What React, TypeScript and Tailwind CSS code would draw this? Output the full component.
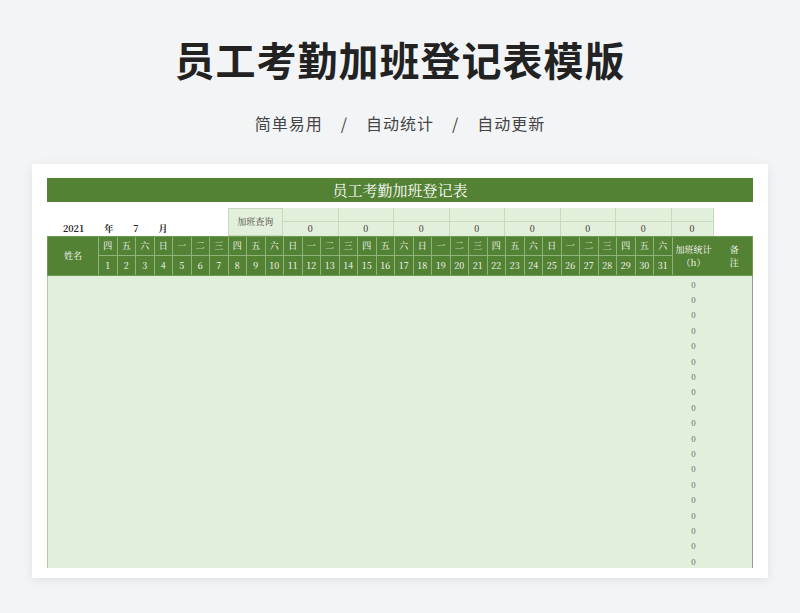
const cols = "grid-cols-[51px_repeat(31,18.5px)_42px_39.5px]";
const wk = ["日", "一", "二", "三", "四", "五", "六"];
const days = Array.from({ length: 31 }, (_, i) => i + 1);
const weekday = (d: number) => wk[(d + 3) % 7];
const groups = [11, 14, 17, 20, 23, 26, 29];
const serif = { fontFamily: '"Noto Serif CJK SC","Noto Sans CJK SC",serif' };

export default function App() {
  return (
    <div className="w-[800px] h-[613px] bg-[#f3f4f6] overflow-hidden" style={{ fontFamily: '"Noto Sans CJK SC", sans-serif' }}>
      <h1 className="pt-[33px] text-center text-[40px] leading-[52px] font-bold text-[#222] tracking-[1px]">员工考勤加班登记表模版</h1>
      <p className="mt-[26px] text-center text-[16px] leading-[24px] text-[#444] tracking-[1px]">
        简单易用<span className="mx-[18px]">/</span>自动统计<span className="mx-[18px]">/</span>自动更新
      </p>
      <div className="mx-[32px] mt-[29px] h-[414px] bg-white shadow-[0_2px_10px_rgba(0,0,0,0.08)] px-[15px] pt-[14px]" style={serif}>
        <div className="h-[24px] bg-[#548235] text-center text-white text-[15px] leading-[24px]">员工考勤加班登记表</div>
        <div className={`mt-[6px] grid ${cols} grid-rows-[14px_14px] text-[9px] text-[#222]`}>
          <div className="col-[1/8] row-[2] flex items-end gap-[20px] pl-[16px] font-bold leading-[14px]">
            <span>2021</span><span>年</span><span>7</span><span>月</span>
          </div>
          <div className="col-[9/12] row-[1/3] bg-[#e2efda] border border-[#c9d9bf] flex items-center justify-center text-[#444]">加班查询</div>
          {groups.map((g) => (
            <div key={g} className="contents">
              <div className="row-[1] bg-[#e2efda] border-r border-b border-[#c9d9bf]" style={{ gridColumn: `${g + 1} / span 3` }} />
              <div className="row-[2] bg-[#e2efda] border-r border-[#c9d9bf] flex items-center justify-center" style={{ gridColumn: `${g + 1} / span 3` }}>0</div>
            </div>
          ))}
          <div className="col-[33] row-[1] bg-[#e2efda] border-r border-b border-[#c9d9bf]" />
          <div className="col-[33] row-[2] bg-[#e2efda] border-r border-[#c9d9bf] flex items-center justify-center">0</div>
        </div>
        <div className={`grid ${cols} grid-rows-[19px_19px] bg-[#548235] text-white text-[9px] border border-[#6f9a52]`}>
          <div className="row-[1/3] col-[1] flex items-center justify-center border-r border-[#8fb37a]">姓名</div>
          {days.map((d) => (
            <div key={"w" + d} className="row-[1] flex items-center justify-center border-r border-b border-[#8fb37a]" style={{ gridColumn: d + 1 }}>{weekday(d)}</div>
          ))}
          {days.map((d) => (
            <div key={"d" + d} className="row-[2] flex items-center justify-center border-r border-[#8fb37a]" style={{ gridColumn: d + 1 }}>{d}</div>
          ))}
          <div className="row-[1/3] col-[33] flex flex-col items-center justify-center leading-[13px]"><span>加班统计</span><span>（h）</span></div>
          <div className="row-[1/3] col-[34] flex flex-col items-center justify-center leading-[13px]"><span>备</span><span>注</span></div>
        </div>
        <div className={`grid ${cols} h-[292px] bg-[#e2efda] border-x border-[#b7c9ac] border-r-[#999] content-start pt-[1px]`}>
          {Array.from({ length: 19 }, (_, i) => (
            <div key={i} className="col-[33] h-[15.4px] flex items-center justify-center text-[8px] text-[#555]">0</div>
          ))}
        </div>
      </div>
    </div>
  );
}
